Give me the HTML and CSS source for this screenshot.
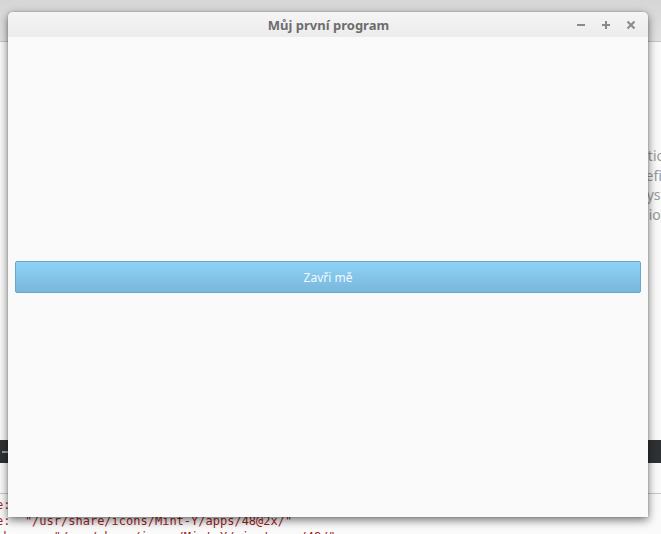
FILE: index.html
```html
<!DOCTYPE html>
<html lang="cs">
<head>
<meta charset="utf-8">
<title>Můj první program</title>
<link rel="stylesheet" href="styles.css">
</head>
<body>
<div class="desktop">
  <div class="bg-app">
    <div class="bg-header"></div>
    <div class="bg-text">
      <div>ation</div>
      <div>refine</div>
      <div>syst</div>
      <div>nion</div>
    </div>
    <div class="bg-toolbar"><span class="bg-dash"></span></div>
    <div class="bg-sep"></div>
    <div class="bg-code">
      <div class="code-line">e:</div>
      <div class="code-line">e:  "/usr/share/icons/Mint-Y/apps/48@2x/"</div>
      <div class="code-line">th:     "/usr/share/icons/Mint-Y/mimetypes/48/"</div>
    </div>
  </div>

  <div class="window">
    <div class="titlebar">
      <span class="title">Můj první program</span>
      <div class="controls">
        <svg class="ctl" width="10" height="10" viewBox="0 0 10 10"><rect x="1" y="4" width="8" height="2" fill="#8a8a8a"/></svg>
        <svg class="ctl" width="10" height="10" viewBox="0 0 10 10"><rect x="1" y="4" width="8" height="2" fill="#8a8a8a"/><rect x="4" y="1" width="2" height="8" fill="#8a8a8a"/></svg>
        <svg class="ctl" width="10" height="10" viewBox="0 0 10 10"><path d="M1.5 1.5 L8.5 8.5 M8.5 1.5 L1.5 8.5" stroke="#8a8a8a" stroke-width="2"/></svg>
      </div>
    </div>
    <div class="content">
      <button class="close-btn">Zavři mě</button>
    </div>
  </div>
</div>
</body>
</html>
```
FILE: styles.css
```css
* { box-sizing: border-box; }
html, body {
  margin: 0;
  padding: 0;
  width: 661px;
  height: 534px;
  overflow: hidden;
}
body {
  background: #fafafa;
  font-family: "Noto Sans", "Open Sans", sans-serif;
}
.desktop {
  position: relative;
  width: 661px;
  height: 534px;
  overflow: hidden;
}
.bg-app {
  width: 661px;
  height: 534px;
  display: flex;
  flex-direction: column;
}
.bg-app > * { flex-shrink: 0; }
.bg-header {
  height: 42px;
  background: linear-gradient(#d6d6d6, #e2e2e2);
  border-bottom: 1px solid #c4c4c4;
}
.bg-text {
  margin-top: 104px;
  padding-left: 640px;
  font-size: 14px;
  line-height: 19.5px;
  color: #999;
  white-space: nowrap;
}
.bg-toolbar {
  margin-top: 216px;
  height: 23px;
  background: #2f3234;
  display: flex;
  align-items: center;
  padding-left: 2px;
}
.bg-dash {
  width: 6px;
  height: 2px;
  background: #9a9a9a;
}
.bg-sep {
  margin-top: 30px;
  height: 1px;
  background: #c8c8c8;
}
.bg-code {
  margin-top: 3px;
  margin-left: -4px;
  font-family: "DejaVu Sans Mono", "Liberation Mono", monospace;
  font-size: 12px;
  line-height: 16px;
  color: #a01e1e;
}
.code-line { white-space: pre; }

.window {
  position: absolute;
  left: 8px;
  top: 12px;
  width: 640px;
  height: 505px;
  background: #fafafa;
  border-radius: 5px 5px 0 0;
  box-shadow: 0 3px 10px rgba(0, 0, 0, 0.55), 0 0 2px rgba(0, 0, 0, 0.25);
  display: flex;
  flex-direction: column;
}
.titlebar {
  position: relative;
  height: 25px;
  flex: none;
  background: linear-gradient(#f5f5f5, #ececec);
  border-radius: 5px 5px 0 0;
  display: flex;
  align-items: center;
  justify-content: center;
}
.title {
  font-size: 13px;
  font-weight: bold;
  color: #6d6d6d;
  margin-left: 1px;
}
.controls {
  position: absolute;
  right: 12px;
  top: 8px;
  display: flex;
  gap: 15px;
}
.ctl { display: block; }
.content {
  flex: 1;
  display: flex;
  align-items: center;
  padding: 0 7px;
}
.close-btn {
  width: 100%;
  height: 32px;
  border: 1px solid #6aa6ca;
  border-radius: 2px;
  background: linear-gradient(#8dd3f6, #79b7db);
  color: #f4faff;
  font-family: "Noto Sans", "Open Sans", sans-serif;
  font-size: 12px;
  padding: 0;
}
```
